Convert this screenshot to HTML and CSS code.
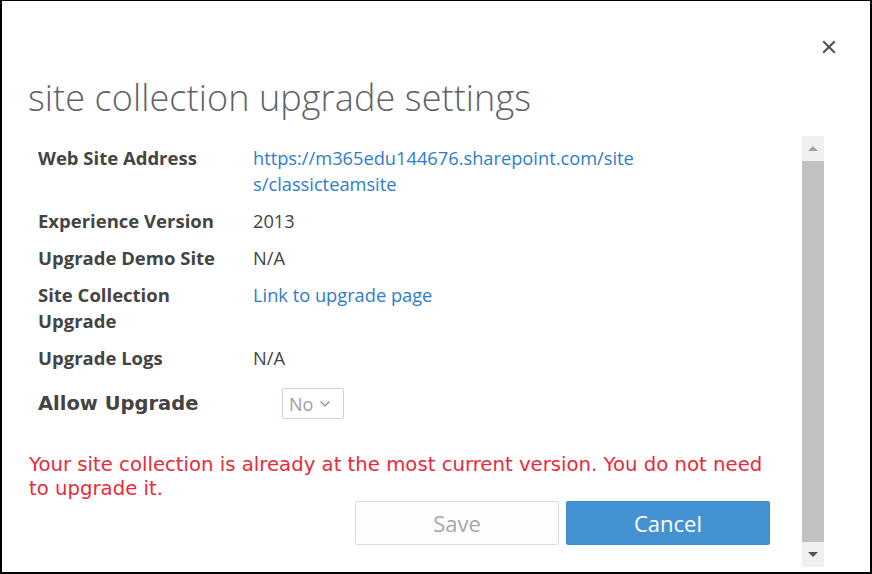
FILE: index.html
```html
<!DOCTYPE html>
<html lang="en">
<head>
<meta charset="utf-8">
<title>site collection upgrade settings</title>
<link rel="stylesheet" href="styles.css">
</head>
<body>
<div class="frame">
  <div class="header">
    <div class="close-row">
      <button class="close" aria-label="Close">
        <svg width="14" height="14" viewBox="0 0 14 14"><path d="M1.2 1.2 L12.8 12.8 M12.8 1.2 L1.2 12.8" stroke="#555" stroke-width="2.2" fill="none"/></svg>
      </button>
    </div>
    <h1 class="title">site collection upgrade settings</h1>
  </div>
  <div class="main">
    <div class="content">
      <div class="props">
        <div class="label">Web Site Address</div>
        <div class="value"><a class="link" href="#">https://m365edu144676.sharepoint.com/site<br>s/classicteamsite</a></div>
        <div class="label">Experience Version</div>
        <div class="value">2013</div>
        <div class="label">Upgrade Demo Site</div>
        <div class="value">N/A</div>
        <div class="label">Site Collection<br>Upgrade</div>
        <div class="value"><a class="link" href="#">Link to upgrade page</a></div>
        <div class="label">Upgrade Logs</div>
        <div class="value">N/A</div>
      </div>
      <div class="allow">
        <div class="allow-label">Allow Upgrade</div>
        <div class="select">No
          <svg width="12" height="8" viewBox="0 0 12 8"><path d="M1.5 1.5 L6 6 L10.5 1.5" stroke="#888" stroke-width="1.2" fill="none"/></svg>
        </div>
      </div>
      <p class="message">Your site collection is already at the most current version. You do not need<br>to upgrade it.</p>
      <div class="actions">
        <button class="btn btn-save">Save</button>
        <button class="btn btn-cancel">Cancel</button>
      </div>
    </div>
    <div class="scrollbar">
      <div class="sb-btn"><span class="tri-up"></span></div>
      <div class="sb-thumb"></div>
      <div class="sb-btn"><span class="tri-down"></span></div>
    </div>
  </div>
</div>
</body>
</html>
```
FILE: styles.css
```css
html, body {
  margin: 0;
  padding: 0;
  background: #fff;
}
.frame {
  width: 872px;
  height: 574px;
  box-sizing: border-box;
  border-style: solid;
  border-color: #000;
  border-width: 1px 2px 2px 2px;
  background: #fff;
  display: flex;
  flex-direction: column;
  overflow: hidden;
}
.header {
  height: 135px;
  display: flex;
  flex-direction: column;
  flex-shrink: 0;
}
.close-row {
  display: flex;
  justify-content: flex-end;
  padding: 39px 34px 0 0;
}
.close {
  border: 0;
  background: none;
  padding: 0;
  width: 14px;
  height: 14px;
  display: block;
}
.close svg { display: block; }
.title {
  margin: 22px 0 0 26px;
  font-family: "Open Sans", sans-serif;
  font-weight: 300;
  font-size: 36px;
  line-height: 44px;
  color: #5f6266;
  letter-spacing: 0.1px;
}
.main {
  flex: 1;
  display: flex;
  min-height: 0;
}
.content {
  flex: 1;
  padding: 9px 32px 0 27px;
  min-width: 0;
}
.props {
  display: grid;
  grid-template-columns: 215px 1fr;
  row-gap: 11px;
  padding-left: 9px;
  font-family: "Open Sans", sans-serif;
  font-size: 18.25px;
  line-height: 26px;
  color: #444;
}
.label {
  font-weight: 700;
  font-size: 18.5px;
  color: #444;
}
.value { color: #444; }
.link {
  color: #2f7ccb;
  text-decoration: none;
}
.allow {
  display: flex;
  align-items: center;
  padding-left: 9px;
  margin-top: 17px;
}
.allow-label {
  width: 244px;
  font-family: "DejaVu Sans", sans-serif;
  font-weight: bold;
  font-size: 19.5px;
  color: #444;
}
.select {
  box-sizing: border-box;
  width: 62px;
  height: 31px;
  border: 1px solid #c8d4e2;
  border-radius: 2px;
  display: flex;
  align-items: center;
  gap: 6px;
  padding-left: 6px;
  font-family: "Open Sans", sans-serif;
  font-size: 18px;
  color: #a0a0a0;
}
.message {
  margin: 34px 0 0 0;
  font-family: "DejaVu Sans", sans-serif;
  font-size: 19.7px;
  line-height: 24px;
  color: #ea2a3c;
}
.actions {
  display: flex;
  justify-content: flex-end;
  gap: 7px;
  margin-top: 0;
}
.btn {
  box-sizing: border-box;
  width: 204px;
  height: 44px;
  border-radius: 2px;
  font-family: "Open Sans", sans-serif;
  font-size: 22px;
}
.btn-save {
  background: #fdfdfd;
  border: 1px solid #dcdcdc;
  color: #a3a8ab;
}
.btn-cancel {
  background: #4592d2;
  border: 1px solid #3f8ccc;
  color: #fff;
}
.scrollbar {
  width: 22px;
  margin: 0 46px 5px 0;
  background: #f0f0f0;
  display: flex;
  flex-direction: column;
}
.sb-btn {
  height: 25px;
  display: flex;
  align-items: center;
  justify-content: center;
}
.sb-thumb {
  flex: 1;
  background: #c1c1c1;
}
.tri-up {
  width: 0;
  height: 0;
  border-left: 5px solid transparent;
  border-right: 5px solid transparent;
  border-bottom: 5px solid #a3a3a3;
}
.tri-down {
  width: 0;
  height: 0;
  border-left: 5px solid transparent;
  border-right: 5px solid transparent;
  border-top: 5px solid #505050;
}
```
